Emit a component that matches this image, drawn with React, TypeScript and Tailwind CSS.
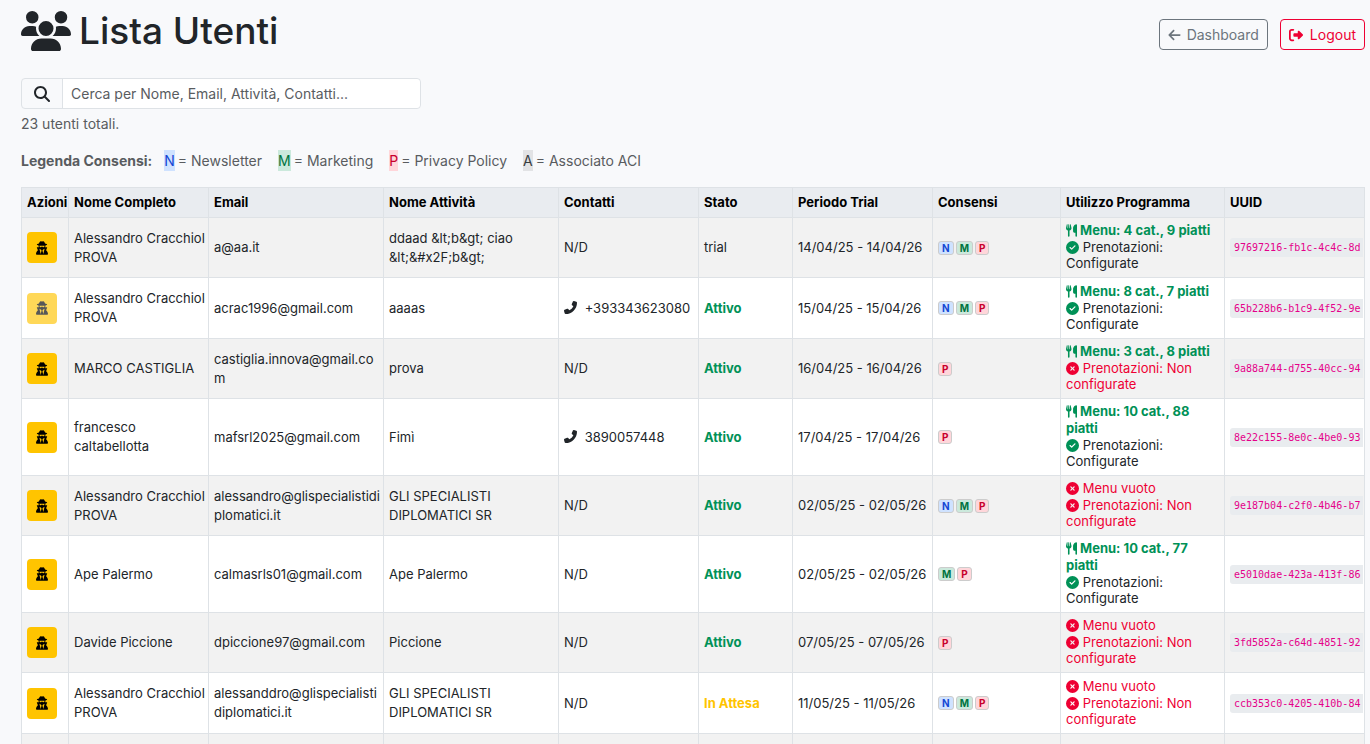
import React, { useState } from 'react';
import {
  FaArrowLeft,
  FaCircleCheck,
  FaCircleXmark,
  FaMagnifyingGlass,
  FaPhoneFlip,
  FaRightFromBracket,
  FaUserSecret,
  FaUsers,
  FaUtensils,
} from 'react-icons/fa6';

type Consent = 'N' | 'M' | 'P' | 'A';

interface User {
  name: string;
  email: string;
  business: string;
  phone?: string;
  status: 'trial' | 'Attivo' | 'In Attesa';
  trial: string;
  consents: Consent[];
  menu?: string;
  bookings: boolean;
  uuid: string;
  disabled?: boolean;
}

const users: User[] = [
  {
    name: 'Alessandro Cracchiol PROVA',
    email: 'a@aa.it',
    business: 'ddaad &lt;b&gt; ciao &lt;&#x2F;b&gt;',
    status: 'trial',
    trial: '14/04/25 - 14/04/26',
    consents: ['N', 'M', 'P'],
    menu: '4 cat., 9 piatti',
    bookings: true,
    uuid: '97697216-fb1c-4c4c-8d',
  },
  {
    name: 'Alessandro Cracchiol PROVA',
    email: 'acrac1996@gmail.com',
    business: 'aaaas',
    phone: '+393343623080',
    status: 'Attivo',
    trial: '15/04/25 - 15/04/26',
    consents: ['N', 'M', 'P'],
    menu: '8 cat., 7 piatti',
    bookings: true,
    uuid: '65b228b6-b1c9-4f52-9e',
    disabled: true,
  },
  {
    name: 'MARCO CASTIGLIA',
    email: 'castiglia.innova@gmail.com',
    business: 'prova',
    status: 'Attivo',
    trial: '16/04/25 - 16/04/26',
    consents: ['P'],
    menu: '3 cat., 8 piatti',
    bookings: false,
    uuid: '9a88a744-d755-40cc-94',
  },
  {
    name: 'francesco caltabellotta',
    email: 'mafsrl2025@gmail.com',
    business: 'Fimì',
    phone: '3890057448',
    status: 'Attivo',
    trial: '17/04/25 - 17/04/26',
    consents: ['P'],
    menu: '10 cat., 88 piatti',
    bookings: true,
    uuid: '8e22c155-8e0c-4be0-93',
  },
  {
    name: 'Alessandro Cracchiol PROVA',
    email: 'alessandro@glispecialistidiplomatici.it',
    business: 'GLI SPECIALISTI DIPLOMATICI SR',
    status: 'Attivo',
    trial: '02/05/25 - 02/05/26',
    consents: ['N', 'M', 'P'],
    bookings: false,
    uuid: '9e187b04-c2f0-4b46-b7',
  },
  {
    name: 'Ape Palermo',
    email: 'calmasrls01@gmail.com',
    business: 'Ape Palermo',
    status: 'Attivo',
    trial: '02/05/25 - 02/05/26',
    consents: ['M', 'P'],
    menu: '10 cat., 77 piatti',
    bookings: true,
    uuid: 'e5010dae-423a-413f-86',
  },
  {
    name: 'Davide Piccione',
    email: 'dpiccione97@gmail.com',
    business: 'Piccione',
    status: 'Attivo',
    trial: '07/05/25 - 07/05/26',
    consents: ['P'],
    bookings: false,
    uuid: '3fd5852a-c64d-4851-92',
  },
  {
    name: 'Alessandro Cracchiol PROVA',
    email: 'alessanddro@glispecialistidiplomatici.it',
    business: 'GLI SPECIALISTI DIPLOMATICI SR',
    status: 'In Attesa',
    trial: '11/05/25 - 11/05/26',
    consents: ['N', 'M', 'P'],
    bookings: false,
    uuid: 'ccb353c0-4205-410b-84',
  },
];

const consentColors: Record<Consent, string> = {
  N: 'bg-[#cfe2ff] text-[#1447d4]',
  M: 'bg-[#cbe9dc] text-[#00733f]',
  P: 'bg-[#ffd6da] text-[#c8002c]',
  A: 'bg-[#e2e3e5] text-[#383d41]',
};

const legend: { code: Consent; label: string }[] = [
  { code: 'N', label: 'Newsletter' },
  { code: 'M', label: 'Marketing' },
  { code: 'P', label: 'Privacy Policy' },
  { code: 'A', label: 'Associato ACI' },
];

const columns = [
  { label: 'Azioni', width: 'w-[47px]' },
  { label: 'Nome Completo', width: 'w-[140px]' },
  { label: 'Email', width: 'w-[175px]' },
  { label: 'Nome Attività', width: 'w-[175px]' },
  { label: 'Contatti', width: 'w-[140px]' },
  { label: 'Stato', width: 'w-[94px]' },
  { label: 'Periodo Trial', width: 'w-[140px]' },
  { label: 'Consensi', width: 'w-[128px]' },
  { label: 'Utilizzo Programma', width: 'w-[164px]' },
  { label: 'UUID', width: '' },
];

const statusColors = {
  trial: '',
  Attivo: 'font-bold text-[#009157]',
  'In Attesa': 'font-bold text-[#ffc400]',
};

const cell = 'border border-[#dee2e6] py-[5px] pr-px pl-[5px]';

const Usage: React.FC<{ user: User }> = ({ user }) => (
  <>
    {user.menu ? (
      <div className="leading-[17px] font-bold text-[#009157]">
        <FaUtensils className="inline-block h-[13px] w-[11px] align-[-2px]" /> Menu: {user.menu}
      </div>
    ) : (
      <div className="leading-[17px] text-[#ee0033]">
        <FaCircleXmark className="inline-block size-[13px] align-[-2px]" /> Menu vuoto
      </div>
    )}
    {user.bookings ? (
      <div className="leading-4">
        <FaCircleCheck className="inline-block size-[13px] align-[-2px] text-[#009157]" /> Prenotazioni: Configurate
      </div>
    ) : (
      <div className="leading-4 text-[#ee0033]">
        <FaCircleXmark className="inline-block size-[13px] align-[-2px]" /> Prenotazioni: Non configurate
      </div>
    )}
  </>
);

const UserRow: React.FC<{ user: User }> = ({ user }) => (
  <tr className="odd:bg-[#f2f2f2] even:h-[61px] even:bg-white">
    <td className={cell}>
      <button
        type="button"
        aria-label="Impersona"
        disabled={user.disabled}
        className="flex h-[31px] w-[30px] items-center justify-center rounded bg-[#ffc400] text-black disabled:opacity-65"
      >
        <FaUserSecret className="h-[14px] w-3" />
      </button>
    </td>
    <td className={cell}>{user.name}</td>
    <td className={`${cell} break-all`}>{user.email}</td>
    <td className={cell}>{user.business}</td>
    <td className={cell}>
      {user.phone ? (
        <>
          <FaPhoneFlip className="mr-1 inline-block size-[13px] align-[-1px]" /> {user.phone}
        </>
      ) : (
        'N/D'
      )}
    </td>
    <td className={`${cell} ${statusColors[user.status]}`}>{user.status}</td>
    <td className={cell}>{user.trial}</td>
    <td className={cell}>
      <div className="flex gap-0.5">
        {user.consents.map((code) => (
          <span
            key={code}
            className={`rounded-[3px] border border-[#cccccc] px-[3px] text-[10px] leading-3 font-bold ${consentColors[code]}`}
          >
            {code}
          </span>
        ))}
      </div>
    </td>
    <td className="border border-[#dee2e6] pt-1 pr-2 pb-1.5 pl-[5px]">
      <Usage user={user} />
    </td>
    <td className={`${cell} overflow-hidden whitespace-nowrap`}>
      <code className="block rounded-l-[3px] bg-[#e9ecef] px-1 font-['DejaVu_Sans_Mono',monospace] text-[10px] leading-[19px] text-[#e5008a]">
        {user.uuid}
      </code>
    </td>
  </tr>
);

export default function App() {
  const [search, setSearch] = useState('');

  const query = search.trim().toLowerCase();
  const visible = users.filter((u) =>
    [u.name, u.email, u.business, u.phone ?? ''].some((v) => v.toLowerCase().includes(query))
  );

  return (
    <div className="min-h-screen bg-[#f8f9fb] pr-[5px] pl-[21px] font-[Inter,sans-serif] text-[#212529]">
      <header className="flex items-center justify-between pt-2">
        <h1 className="flex items-center gap-2 text-[37px] leading-[46px] font-medium">
          <FaUsers className="h-10 w-[50px]" />
          Lista Utenti
        </h1>
        <div className="flex gap-3 pt-[7px] text-sm">
          <a
            href="#dashboard"
            className="flex h-[31px] items-center gap-1.5 rounded border border-[#6c757d] px-2 text-[#6c757d]"
          >
            <FaArrowLeft className="h-[14px] w-[13px]" />
            Dashboard
          </a>
          <a
            href="#logout"
            className="flex h-[31px] items-center gap-[7px] rounded border border-[#ee0033] px-2 text-[#ee0033]"
          >
            <FaRightFromBracket className="size-[14px]" />
            Logout
          </a>
        </div>
      </header>

      <div className="mt-6 flex h-[31px] w-full max-w-[400px] rounded border border-[#dee2e6] text-sm">
        <label htmlFor="search" className="flex w-[41px] items-center justify-center border-r border-[#dee2e6]">
          <FaMagnifyingGlass className="size-4" aria-label="Cerca" />
        </label>
        <input
          id="search"
          type="text"
          value={search}
          onChange={(e) => setSearch(e.target.value)}
          placeholder="Cerca per Nome, Email, Attività, Contatti..."
          className="min-w-0 flex-1 rounded-r bg-white px-2 placeholder:text-[#595c5f] focus:outline-none"
        />
      </div>
      <p className="mt-1 text-sm leading-[21px] text-[#595c5f]">23 utenti totali.</p>

      <div className="mt-4 flex text-sm leading-[21px] text-[#595c5f]">
        <strong className="mr-3 font-bold">Legenda Consensi:</strong>
        <ul className="flex gap-4">
          {legend.map(({ code, label }) => (
            <li key={code} className="flex gap-[3px]">
              <span className={consentColors[code]}>{code}</span>= {label}
            </li>
          ))}
        </ul>
      </div>

      <table className="mt-4 w-full table-fixed border-collapse text-[13px] leading-[19px]">
        <thead>
          <tr className="bg-[#e9ecf0] text-left text-black">
            {columns.map(({ label, width }) => (
              <th key={label} className={`${cell} ${width} font-bold whitespace-nowrap`}>
                {label}
              </th>
            ))}
          </tr>
        </thead>
        <tbody>
          {visible.map((user) => (
            <UserRow key={user.uuid} user={user} />
          ))}
          <tr className="h-[10px] bg-[#f2f2f2]">
            {columns.map(({ label }) => (
              <td key={label} className="border-x border-[#dee2e6]" />
            ))}
          </tr>
        </tbody>
      </table>
    </div>
  );
}
